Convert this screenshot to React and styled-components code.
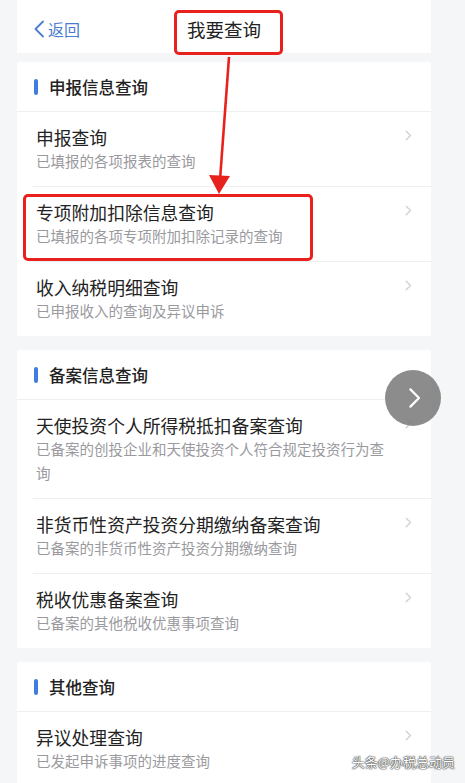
import React from "react";
import styled, { createGlobalStyle } from "styled-components";

const GlobalStyle = createGlobalStyle`
  body {
    margin: 0;
    background: #f5f6f8;
    font-family: "Noto Sans CJK SC", "Noto Sans", sans-serif;
  }
`;

const sections = [
  {
    title: "申报信息查询",
    items: [
      { name: "申报查询", desc: "已填报的各项报表的查询" },
      {
        name: "专项附加扣除信息查询",
        desc: "已填报的各项专项附加扣除记录的查询",
        marked: true,
      },
      { name: "收入纳税明细查询", desc: "已申报收入的查询及异议申诉" },
    ],
  },
  {
    title: "备案信息查询",
    items: [
      {
        name: "天使投资个人所得税抵扣备案查询",
        desc: "已备案的创投企业和天使投资个人符合规定投资行为查询",
      },
      {
        name: "非货币性资产投资分期缴纳备案查询",
        desc: "已备案的非货币性资产投资分期缴纳查询",
      },
      { name: "税收优惠备案查询", desc: "已备案的其他税收优惠事项查询" },
    ],
  },
  {
    title: "其他查询",
    items: [{ name: "异议处理查询", desc: "已发起申诉事项的进度查询" }],
  },
];

const Chevron = ({ color = "#cfcfd3", width = 7, height = 11, stroke = 1.3 }) => (
  <svg width={width} height={height} viewBox="0 0 7 11" fill="none">
    <path
      d="M1.2 1.2l4.3 4.3-4.3 4.3"
      stroke={color}
      strokeWidth={stroke}
      strokeLinecap="round"
      strokeLinejoin="round"
    />
  </svg>
);

const App = () => {
  return (
    <>
      <GlobalStyle />
      <Page>
        <Column>
          <Header>
            <Back>
              <svg width="12" height="18" viewBox="0 0 12 18" fill="none">
                <path
                  d="M10 1.5L2.5 9l7.5 7.5"
                  stroke="#4a7dd0"
                  strokeWidth="1.8"
                  strokeLinecap="round"
                  strokeLinejoin="round"
                />
              </svg>
              返回
            </Back>
            <Title>
              我要查询
              <MarkBox $top={-6} $left={-13} $width={109} $height={45} />
            </Title>
          </Header>

          {sections.map((section, i) => (
            <Card key={section.title} $first={i === 0}>
              <SectionHeader>
                <Bar />
                {section.title}
              </SectionHeader>
              {section.items.map((item) => (
                <Row key={item.name}>
                  <Texts>
                    <ItemName>{item.name}</ItemName>
                    <ItemDesc>{item.desc}</ItemDesc>
                  </Texts>
                  <Arrow>
                    <Chevron />
                  </Arrow>
                  {item.marked && (
                    <MarkBox $top={7} $left={-10} $width={290} $height={67} />
                  )}
                </Row>
              ))}
            </Card>
          ))}
        </Column>

        <Pointer width="465" height="200" viewBox="0 0 465 200">
          <line x1="229" y1="57" x2="220" y2="180" stroke="#e8211c" strokeWidth="2.6" />
          <polygon points="209,175 230,176 219,194" fill="#e8211c" />
        </Pointer>

        <FloatButton>
          <Chevron color="#ffffff" width={14} height={22} stroke={1.1} />
        </FloatButton>

        <Watermark>头条@办税总动员</Watermark>
      </Page>
    </>
  );
};

const Page = styled.div`
  position: relative;
  width: 465px;
  height: 783px;
  overflow: hidden;
  background: #f5f6f8;
`;

const Column = styled.div`
  width: 414px;
  margin-left: 17px;
`;

const Header = styled.header`
  height: 53px;
  background: #ffffff;
  display: grid;
  grid-template-columns: 1fr auto 1fr;
  align-items: center;
  padding-top: 5px;
  box-sizing: border-box;
`;

const Back = styled.div`
  display: flex;
  align-items: center;
  gap: 3px;
  padding-left: 16px;
  font-size: 16px;
  color: #4a7dd0;
`;

const Title = styled.div`
  position: relative;
  font-size: 18.5px;
  color: #222222;
  line-height: 26px;
`;

const MarkBox = styled.div`
  position: absolute;
  top: ${(p) => p.$top}px;
  left: ${(p) => p.$left}px;
  width: ${(p) => p.$width}px;
  height: ${(p) => p.$height}px;
  box-sizing: border-box;
  border: 3.5px solid #e8211c;
  border-radius: 5px;
  pointer-events: none;
`;

const Card = styled.section`
  margin-top: ${(p) => (p.$first ? 9 : 14)}px;
  background: #ffffff;
`;

const SectionHeader = styled.div`
  height: 49px;
  display: flex;
  align-items: center;
  gap: 11px;
  padding-left: 17px;
  border-bottom: 1px solid #eeeff1;
  font-size: 16.5px;
  font-weight: 500;
  color: #222222;
`;

const Bar = styled.span`
  width: 4px;
  height: 16px;
  border-radius: 2px;
  background: #3f7de2;
`;

const Row = styled.div`
  position: relative;
  display: flex;
  margin-left: 16px;
  padding: 13px 0 13px 3px;

  & + & {
    border-top: 1px solid #eeeff1;
  }
`;

const Texts = styled.div`
  width: 355px;
`;

const ItemName = styled.div`
  font-size: 17.8px;
  line-height: 24px;
  color: #222222;
`;

const ItemDesc = styled.div`
  font-size: 14.5px;
  line-height: 24px;
  color: #9a9a9e;
`;

const Arrow = styled.div`
  display: flex;
  align-items: flex-start;
  line-height: 0;
  padding: 5px 0 0 14px;
`;

const Pointer = styled.svg`
  position: absolute;
  top: 0;
  left: 0;
  pointer-events: none;
`;

const FloatButton = styled.div`
  position: absolute;
  left: 385px;
  top: 370px;
  width: 56px;
  height: 56px;
  border-radius: 50%;
  background: rgba(128, 128, 128, 0.9);
  display: flex;
  align-items: center;
  justify-content: center;
  padding-left: 3px;
  box-sizing: border-box;
`;

const Watermark = styled.div`
  position: absolute;
  right: 10px;
  bottom: 12px;
  font-size: 13px;
  color: #ffffff;
  text-shadow: 0 0 1px #333, 0 0 1px #333, 0 0 2px #555;
`;

export default App;
